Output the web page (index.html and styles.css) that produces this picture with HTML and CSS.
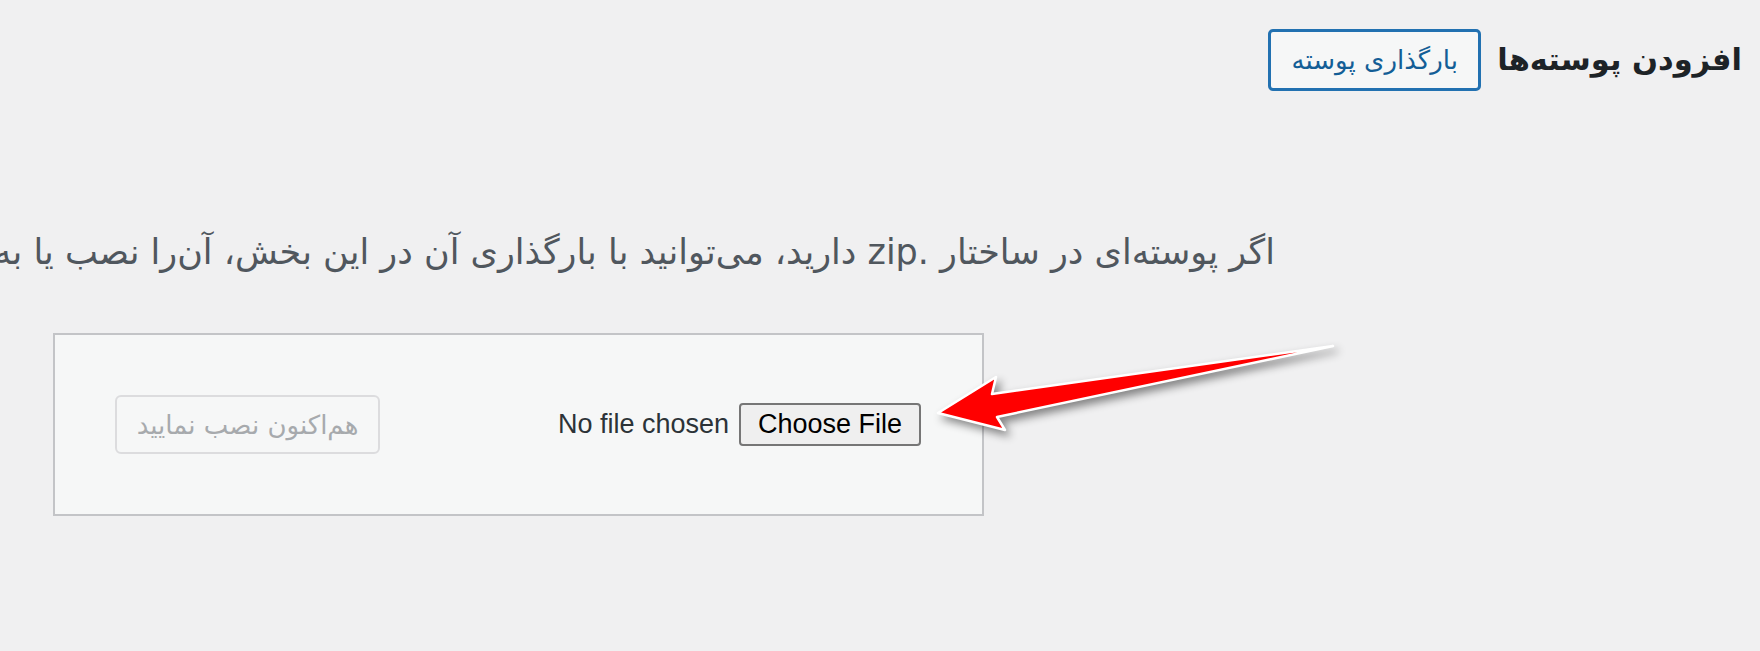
FILE: index.html
```html
<!DOCTYPE html>
<html lang="fa" dir="rtl">
<head>
<meta charset="utf-8">
<title>افزودن پوسته‌ها</title>
<link rel="stylesheet" href="styles.css">
</head>
<body>
<div class="page">
  <header class="head">
    <h1 class="title">افزودن پوسته‌ها</h1>
    <button class="upload-btn">بارگذاری پوسته</button>
  </header>
  <p class="help">اگر پوسته‌ای در ساختار .zip دارید، می‌توانید با بارگذاری آن در این بخش، آن‌را نصب یا به‌روزرسانی کنید.</p>
  <div class="upload-box">
    <div class="file-input">
      <span class="file-btn">Choose File</span>
      <span class="file-name">No file chosen</span>
    </div>
    <button class="install-btn" disabled>هم‌اکنون نصب نمایید</button>
  </div>
  <svg class="arrow" width="1760" height="651" viewBox="0 0 1760 651" xmlns="http://www.w3.org/2000/svg">
    <path d="M938,413 L996,377 L992,394 L1333,346 L997,417 L1005,430 Z" fill="#ff0000" stroke="#ffffff" stroke-width="2.5" stroke-linejoin="round"/>
  </svg>
</div>
</body>
</html>
```
FILE: styles.css
```css
html, body {
  margin: 0;
  padding: 0;
}
body {
  background: #f0f0f1;
  width: 1760px;
  height: 651px;
  overflow: hidden;
  font-family: "DejaVu Sans", sans-serif;
}
.page {
  position: relative;
  width: 1760px;
  height: 651px;
  direction: rtl;
}
.head {
  display: flex;
  align-items: center;
  gap: 16px;
  padding: 29px 18px 0 0;
}
.title {
  margin: 0;
  font-size: 30.5px;
  font-weight: bold;
  color: #1d2327;
  line-height: 62px;
}
.upload-btn {
  box-sizing: border-box;
  width: 213px;
  height: 62px;
  display: flex;
  align-items: center;
  justify-content: center;
  padding: 0;
  border: 3px solid #2271b1;
  border-radius: 5px;
  background: #f6f7f7;
  color: #135e96;
  font-family: "DejaVu Sans", sans-serif;
  font-size: 26px;
}
.help {
  margin: 138px 485px 0 0;
  white-space: nowrap;
  font-size: 35px;
  line-height: 46px;
  color: #50575e;
}
.upload-box {
  box-sizing: border-box;
  width: 931px;
  height: 183px;
  margin: 58px 776px 0 0;
  border: 2px solid #c3c4c7;
  background: #f6f7f7;
  display: flex;
  align-items: center;
  justify-content: space-between;
  padding: 0 61px 0 60px;
}
.file-input {
  display: flex;
  align-items: center;
  gap: 10px;
  font-family: "Liberation Sans", Arial, sans-serif;
  font-size: 27px;
}
.file-btn {
  box-sizing: border-box;
  width: 182px;
  height: 43px;
  display: flex;
  align-items: center;
  justify-content: center;
  border: 2px solid #767676;
  border-radius: 4px;
  background: #efefef;
  color: #000;
}
.file-name {
  color: #2c3338;
}
.install-btn {
  box-sizing: border-box;
  width: 265px;
  height: 59px;
  padding: 0;
  border: 2px solid #dcdcde;
  border-radius: 6px;
  background: #f6f7f7;
  color: #a7aaad;
  font-family: "DejaVu Sans", sans-serif;
  font-size: 26px;
}
.arrow {
  position: absolute;
  left: 0;
  top: 0;
  pointer-events: none;
  filter: drop-shadow(4px 5px 4px rgba(0, 0, 0, 0.45));
}
```
